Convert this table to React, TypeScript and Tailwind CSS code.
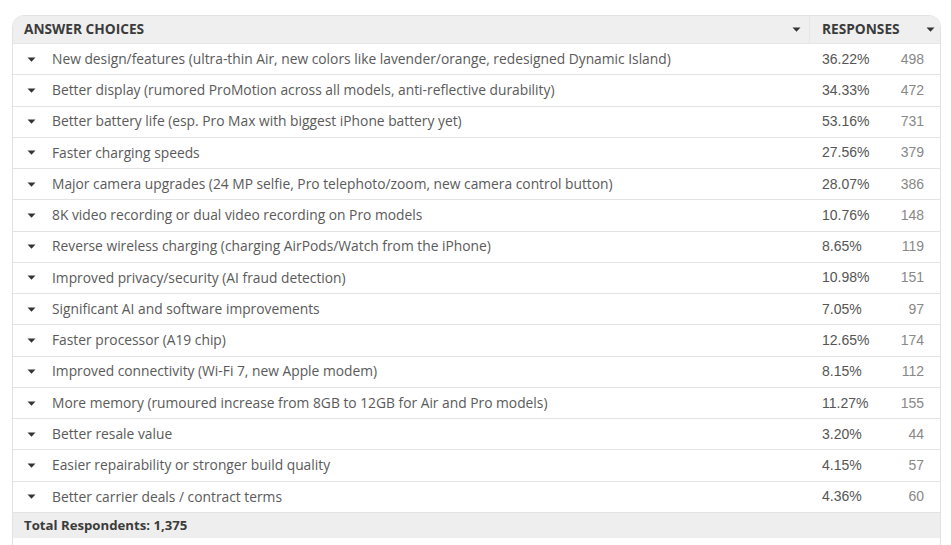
import React from "react";

const rows: [string, string, string][] = [
  ["New design/features (ultra-thin Air, new colors like lavender/orange, redesigned Dynamic Island)", "36.22%", "498"],
  ["Better display (rumored ProMotion across all models, anti-reflective durability)", "34.33%", "472"],
  ["Better battery life (esp. Pro Max with biggest iPhone battery yet)", "53.16%", "731"],
  ["Faster charging speeds", "27.56%", "379"],
  ["Major camera upgrades (24 MP selfie, Pro telephoto/zoom, new camera control button)", "28.07%", "386"],
  ["8K video recording or dual video recording on Pro models", "10.76%", "148"],
  ["Reverse wireless charging (charging AirPods/Watch from the iPhone)", "8.65%", "119"],
  ["Improved privacy/security (AI fraud detection)", "10.98%", "151"],
  ["Significant AI and software improvements", "7.05%", "97"],
  ["Faster processor (A19 chip)", "12.65%", "174"],
  ["Improved connectivity (Wi-Fi 7, new Apple modem)", "8.15%", "112"],
  ["More memory (rumoured increase from 8GB to 12GB for Air and Pro models)", "11.27%", "155"],
  ["Better resale value", "3.20%", "44"],
  ["Easier repairability or stronger build quality", "4.15%", "57"],
  ["Better carrier deals / contract terms", "4.36%", "60"],
];

function Tri({ className = "" }: { className?: string }) {
  return (
    <svg width="9" height="5" viewBox="0 0 9 5" className={className}>
      <path d="M0.5 0.5 L8.5 0.5 L4.5 4.8 Z" fill="#333" />
    </svg>
  );
}

export default function App() {
  return (
    <div className="w-[951px] h-[545px] bg-white overflow-hidden pt-[15px] pl-[12px]" style={{ fontFamily: '"Open Sans", "Liberation Sans", sans-serif' }}>
      <div className="w-[929px] h-[560px] border border-[#e2e2e2] rounded-t-[12px] overflow-hidden">
        <div className="flex h-[28px] bg-[#efefef] text-[#3b3b3b] text-[13.7px] font-bold border-b border-[#e6e6e6]">
          <div className="flex items-center w-[797px] pl-[11px] pr-[8px] border-r border-[#e6e6e6]">
            <span className="flex-1">ANSWER CHOICES</span>
            <Tri />
          </div>
          <div className="flex items-center flex-1 pl-[12px] pr-[5px]">
            <span className="flex-1">RESPONSES</span>
            <Tri />
          </div>
        </div>
        {rows.map(([label, pct, n]) => (
          <div key={label} className="flex items-center h-[31.27px] border-b border-[#e3e3e3]">
            <div className="w-[797px] flex items-center pl-[14px]">
              <Tri className="mr-[16px]" />
              <span className="text-[#5a5a5a] text-[13.8px]">{label}</span>
            </div>
            <div className="w-[63px] pl-[12px] text-[#555] text-[14px]" style={{ fontFamily: '"Liberation Sans", Arial, sans-serif' }}>{pct}</div>
            <div className="w-[51px] text-right text-[#888] text-[14px]" style={{ fontFamily: '"Liberation Sans", Arial, sans-serif' }}>{n}</div>
          </div>
        ))}
        <div className="flex items-center h-[25px] bg-[#eeeeee] pl-[11px] text-[13.2px] font-bold text-[#3b3b3b]">
          Total Respondents: 1,375
        </div>
      </div>
    </div>
  );
}
